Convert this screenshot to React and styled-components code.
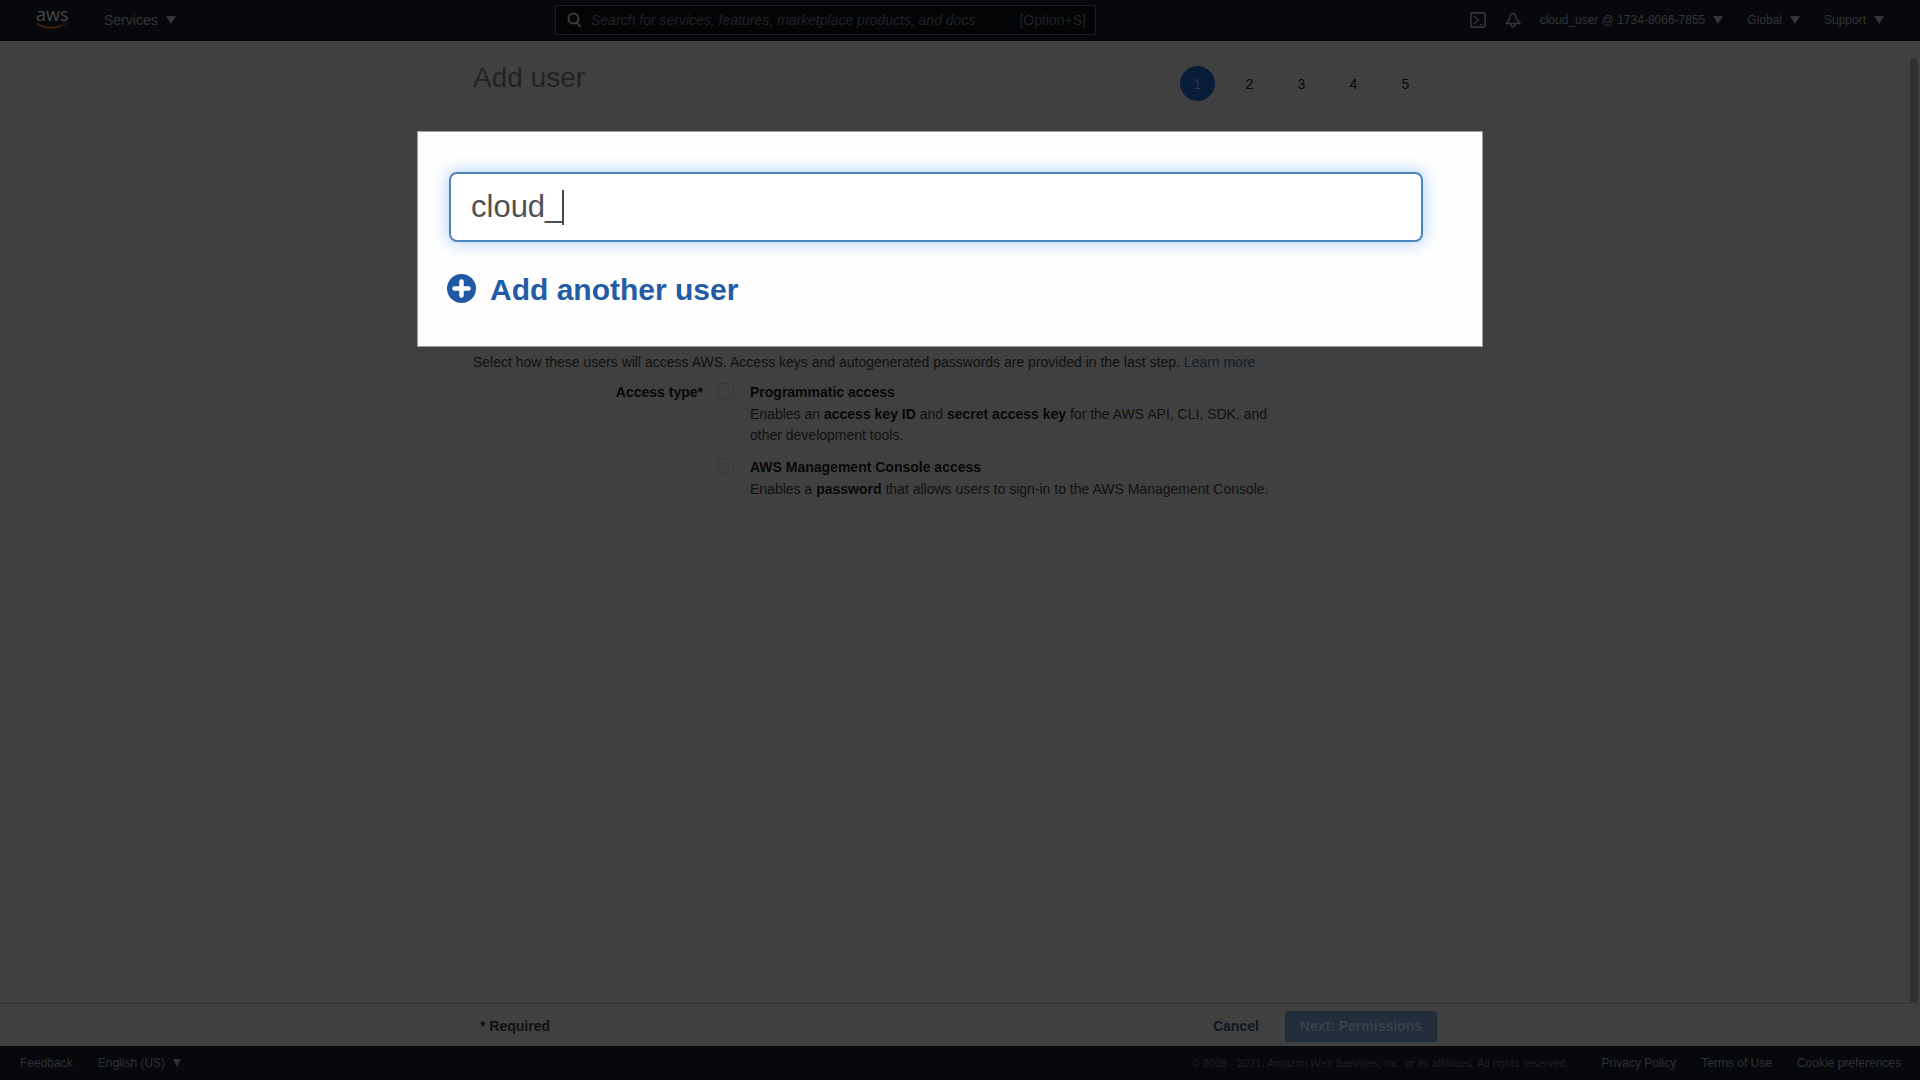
import React, { useState } from "react";
import styled, { createGlobalStyle } from "styled-components";

const GlobalStyle = createGlobalStyle`
  *, *::before, *::after { box-sizing: border-box; }
  body {
    margin: 0;
    background: #404040;
    color: #111111;
    font-family: "Liberation Sans", Arial, sans-serif;
    font-size: 14px;
    line-height: 22px;
  }
  button, input { font: inherit; }
`;

const Page = styled.div`
  display: flex;
  flex-direction: column;
  min-height: 100vh;
`;

const NavBar = styled.header`
  display: flex;
  align-items: center;
  height: 41px;
  padding: 0 36px 2px;
  background: #07080c;
  color: #343538;
`;

const NavGroup = styled.div`
  display: flex;
  flex: ${(p) => (p.$basis ? `0 1 ${p.$basis}px` : "1 1 0")};
  align-items: center;
  justify-content: ${(p) => (p.$end ? "flex-end" : "flex-start")};
  gap: ${(p) => p.$gap}px;
`;

const Logo = styled.a`
  display: flex;
  flex-direction: column;
  align-items: flex-start;
  width: 34px;
  padding-bottom: 3px;
  color: #48494b;
  font-family: "Open Sans", "Noto Sans", sans-serif;
  font-size: 18px;
  line-height: 16px;
  text-decoration: none;

  svg { display: block; }
`;

const MenuButton = styled.button`
  display: flex;
  align-items: center;
  gap: 8px;
  padding: 0;
  border: 0;
  background: none;
  color: inherit;
  font-size: ${(p) => (p.$large ? 14 : 12)}px;
  line-height: 16px;
  white-space: nowrap;
`;

const Caret = styled.span`
  border: ${(p) => (p.$small ? 4 : 5)}px solid transparent;
  border-top: 8px solid currentColor;
  border-bottom: 0;
`;

const IconButton = styled.button`
  display: flex;
  padding: 0;
  border: 0;
  background: none;
  color: inherit;
`;

const SearchBox = styled.label`
  display: flex;
  align-items: center;
  gap: 8px;
  width: 541px;
  height: 30px;
  padding: 0 9px 0 11px;
  border: 1px solid #1b1c20;
  background: #030406;
  color: #222326;

  svg { flex: none; color: #3a3b3e; }
`;

const SearchInput = styled.input`
  flex: 1;
  min-width: 0;
  padding: 0;
  border: 0;
  outline: 0;
  background: none;
  color: inherit;
  font-style: italic;

  &::placeholder { color: inherit; opacity: 1; }
`;

const Body = styled.div`
  display: flex;
  flex: 1;
  padding-right: 2px;
`;

const Main = styled.main`
  flex: 1;
  padding: 24px 0;
`;

const ScrollBar = styled.div`
  width: 8px;
  margin-top: 17px;
  border-radius: 4px 4px 0 0;
  background: #303030;
`;

const Container = styled.div`
  width: 964px;
  max-width: 100%;
  margin: 0 auto;
`;

const TitleRow = styled.div`
  display: flex;
  align-items: flex-start;
  justify-content: space-between;
  height: 66px;
  padding-right: 14px;
`;

const Title = styled.h1`
  margin: 0;
  color: #232323;
  font-size: 28px;
  font-weight: 400;
  line-height: 26px;
`;

const Steps = styled.ol`
  display: flex;
  gap: 17px;
  margin: 1px 0 0;
  padding: 0;
  list-style: none;
`;

const Step = styled.li`
  display: flex;
  align-items: center;
  justify-content: center;
  width: 35px;
  height: 35px;
  border-radius: 50%;
  border: 1px solid ${(p) => (p.$active ? "#081d38" : "#3e3e3e")};
  background: ${(p) => (p.$active ? "#081d38" : "transparent")};
  color: ${(p) => (p.$active ? "#2c3947" : "#060606")};
`;

const Spotlight = styled.section`
  margin: 0 -46px 0 -56px;
  padding: 40px 59px 36px 31px;
  border: 1px solid #9c9c9c;
  background: #fefefe;
`;

const NameField = styled.label`
  display: flex;
  align-items: center;
  position: relative;
  height: 70px;
  border: 2px solid #4b86c0;
  border-radius: 8px;
  background: #fff;
  box-shadow: 0 0 16px 2px #b9d6f6;
`;

const NameInput = styled.input`
  width: 100%;
  height: 100%;
  padding: 0 20px;
  border: 0;
  outline: 0;
  border-radius: 6px;
  background: transparent;
  color: #505052;
  font-size: 31px;
  caret-color: transparent;
`;

const TextCursor = styled.span`
  position: absolute;
  left: 111px;
  top: 16px;
  width: 2px;
  height: 35px;
  background: #4a4a4c;
`;

const AddButton = styled.button`
  display: flex;
  align-items: center;
  gap: 14px;
  margin: 28px 0 0 -2px;
  padding: 0;
  border: 0;
  background: none;
  color: #225ca6;
  font-size: 30px;
  font-weight: 700;
  line-height: 40px;

  svg { margin-bottom: 4px; }
`;

const Intro = styled.p`
  margin: 4px 0 8px;
`;

const Link = styled.a`
  color: ${(p) => p.$color || "#11202d"};
  font-weight: ${(p) => (p.$bold ? 700 : 400)};
  text-decoration: none;
  white-space: nowrap;
`;

const AccessGroup = styled.div`
  display: grid;
  grid-template-columns: 230px 560px;
  column-gap: 15px;
`;

const GroupLabel = styled.div`
  color: #080808;
  font-weight: 700;
  text-align: right;
`;

const Options = styled.div`
  display: flex;
  flex-direction: column;
  gap: 10px;
`;

const Option = styled.div`
  display: grid;
  grid-template-columns: 16px 1fr;
  column-gap: 16px;
`;

const CheckBox = styled.input`
  appearance: none;
  width: 16px;
  height: 16px;
  margin: 2px 0;
  border: 1px solid #393939;
  border-radius: 3px;
`;

const OptionTitle = styled.label`
  color: #080808;
  font-weight: 700;
  line-height: 23px;
`;

const OptionText = styled.p`
  grid-column: 2;
  margin: 0;
  line-height: 21px;

  b { color: #080808; }
`;

const ActionBar = styled.div`
  padding: 5px 10px 3px 0;
  border-top: 2px solid #393939;
  box-shadow: inset 0 2px 0 #404040, inset 0 3px 0 #3b3b3b;
`;

const ActionRow = styled(Container)`
  display: flex;
  align-items: center;
  gap: 26px;
  height: 34px;
  padding-left: 7px;
`;

const Required = styled.strong`
  flex: 1;
`;

const NextButton = styled.button`
  height: 31px;
  padding: 0 14px;
  border: 1px solid #1f2b38;
  border-radius: 3px;
  background: #212d3a;
  color: #37414b;
  font-weight: 700;
`;

const Footer = styled.footer`
  display: flex;
  align-items: center;
  justify-content: space-between;
  height: 34px;
  padding: 0 19px 0 20px;
  background: #07080c;
  color: #303134;
  font-size: 12px;
`;

const FooterGroup = styled.div`
  display: flex;
  align-items: center;
  gap: 25px;
`;

const Copyright = styled.span`
  margin-right: 8px;
  color: #1e1f22;
  font-size: 11px;
`;

const legalLinks = ["Privacy Policy", "Terms of Use", "Cookie preferences"];

const accessOptions = [
  {
    id: "programmatic",
    title: "Programmatic access",
    text: (
      <>
        Enables an <b>access key ID</b> and <b>secret access key</b> for the AWS API, CLI, SDK, and{" "}
        <br />
        other development tools.
      </>
    ),
  },
  {
    id: "console",
    title: "AWS Management Console access",
    text: (
      <>
        Enables a <b>password</b> that allows users to sign-in to the AWS Management Console.
      </>
    ),
  },
];

function Menu({ label, large, small }) {
  return (
    <MenuButton type="button" $large={large}>
      {label}
      <Caret $small={small} />
    </MenuButton>
  );
}

export default function App() {
  const [name, setName] = useState("cloud_");
  return (
    <Page>
      <GlobalStyle />
      <NavBar>
        <NavGroup $gap={34} $basis={519}>
          <Logo href="#home">
            aws
            <svg width="34" height="8" viewBox="0 0 34 8" fill="none">
              <path d="M1 1.5C8 6.5 20 7 27 3" stroke="#40220d" strokeWidth="2" />
              <path d="M26 .8c2-.6 4-.5 4.600 0 .4.900-.3 3-1.500 4.200" stroke="#30200f" strokeWidth="1" />
            </svg>
          </Logo>
          <Menu label="Services" large />
        </NavGroup>
        <SearchBox>
          <svg width="16" height="16" viewBox="0 0 16 16" fill="none" stroke="currentColor" strokeWidth="2">
            <circle cx="6.500" cy="6.500" r="5" />
            <path d="M10 10.500 13.500 15" />
          </svg>
          <SearchInput
            aria-label="Search"
            placeholder="Search for services, features, marketplace products, and docs"
          />
          <span>[Option+S]</span>
        </SearchBox>
        <NavGroup $gap={24} $end>
          <NavGroup as="span" $gap={19} $end>
            <IconButton type="button" aria-label="CloudShell">
              <svg width="16" height="16" viewBox="0 0 16 16" fill="none" stroke="currentColor" strokeWidth="1.600">
                <rect x="0.900" y="0.900" width="14.200" height="14.200" rx="1" />
                <path d="M4 4l4.500 4L4 12M9.500 12.500H13" />
              </svg>
            </IconButton>
            <IconButton type="button" aria-label="Notifications">
              <svg width="16" height="16" viewBox="0 0 16 16" fill="none" stroke="currentColor" strokeWidth="1.600">
                <path d="M1.200 11.500 4.800 6.500C5 3 6.500 1.500 8 1.500S11 3 11.200 6.500l3.600 5ZM5.800 12c.2 3.600 4.200 3.600 4.400 0" />
              </svg>
            </IconButton>
            <Menu label="cloud_user @ 1734-8066-7855" />
          </NavGroup>
          <Menu label="Global" />
          <Menu label="Support" />
        </NavGroup>
      </NavBar>

      <Body>
        <Main>
          <Container>
            <TitleRow>
              <Title>Add user</Title>
              <Steps>
                {[1, 2, 3, 4, 5].map((n) => (
                  <Step key={n} $active={n === 1}>{n}</Step>
                ))}
              </Steps>
            </TitleRow>

            <Spotlight>
              <NameField>
                <NameInput
                  aria-label="User name"
                  value={name}
                  onChange={(e) => setName(e.target.value)}
                />
                <TextCursor />
              </NameField>
              <AddButton type="button">
                <svg width="29" height="29" viewBox="0 0 29 29">
                  <circle cx="14.500" cy="14.500" r="14.500" fill="#2058a4" />
                  <path d="M14.500 7.500v14M7.500 14.500h14" stroke="#fff" strokeWidth="4.500" strokeLinecap="round" />
                </svg>
                Add another user
              </AddButton>
            </Spotlight>

            <Intro>
              Select how these users will access AWS. Access keys and autogenerated passwords are
              provided in the last step. <Link href="#learn">Learn more</Link>
            </Intro>

            <AccessGroup role="group" aria-labelledby="access-type">
              <GroupLabel id="access-type">Access type*</GroupLabel>
              <Options>
                {accessOptions.map((o) => (
                  <Option key={o.id}>
                    <CheckBox type="checkbox" id={o.id} />
                    <OptionTitle htmlFor={o.id}>{o.title}</OptionTitle>
                    <OptionText>{o.text}</OptionText>
                  </Option>
                ))}
              </Options>
            </AccessGroup>
          </Container>
        </Main>
        <ScrollBar />
      </Body>

      <ActionBar>
        <ActionRow>
          <Required>* Required</Required>
          <Link href="#cancel" $bold $color="#0d1824">Cancel</Link>
          <NextButton type="button">Next: Permissions</NextButton>
        </ActionRow>
      </ActionBar>

      <Footer>
        <FooterGroup>
          <Link href="#feedback" $color="inherit">Feedback</Link>
          <Menu label="English (US)" small />
        </FooterGroup>
        <FooterGroup>
          <Copyright>
            © 2008 - 2021, Amazon Web Services, Inc. or its affiliates. All rights reserved.
          </Copyright>
          {legalLinks.map((text) => (
            <Link key={text} href="#legal" $color="inherit">{text}</Link>
          ))}
        </FooterGroup>
      </Footer>
    </Page>
  );
}
